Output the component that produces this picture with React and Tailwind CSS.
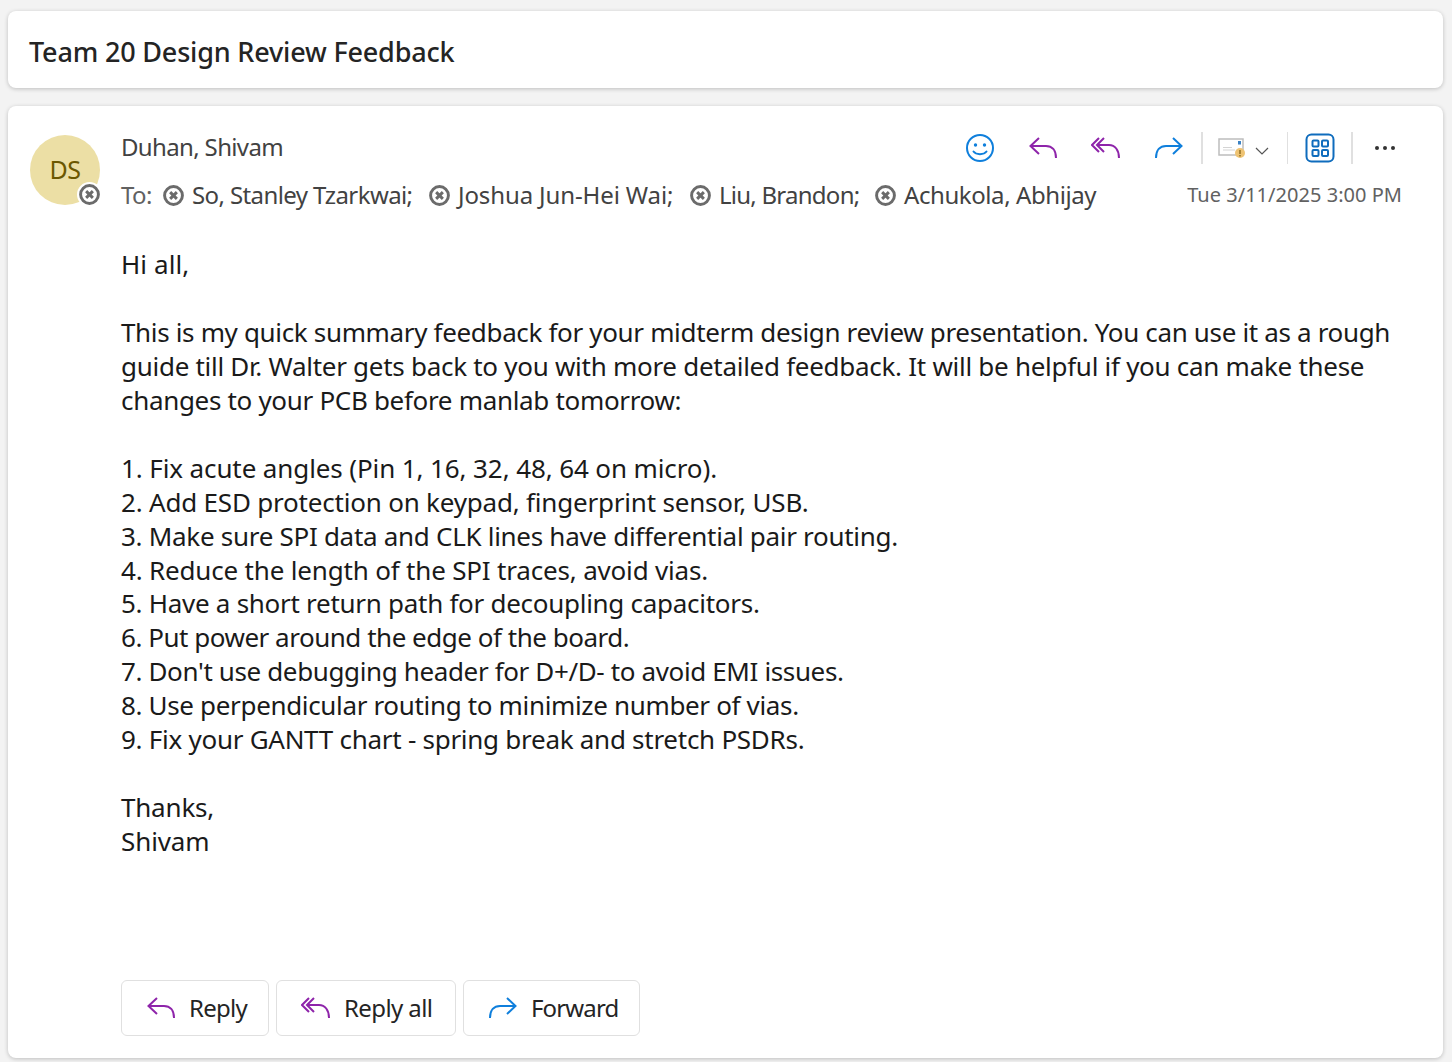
const ReplyIcon = ({ className }) => (
  <svg viewBox="0 0 30 26" className={className} fill="none" stroke="#8e24aa" strokeWidth="2">
    <path d="M11 3 L2.5 11 L11 19" />
    <path d="M2.5 11 H18 C24 11 28 15 28 23" />
  </svg>
);

const ReplyAllIcon = ({ className }) => (
  <svg viewBox="0 0 30 26" className={className} fill="none" stroke="#8e24aa" strokeWidth="2">
    <path d="M8 3 L1 10 L8 17" />
    <path d="M13 3 L6 10 L13 17" />
    <path d="M6 10 H18 C24 10 28 15 28 23" />
  </svg>
);

const ForwardIcon = ({ className }) => (
  <svg viewBox="0 0 30 26" className={className} fill="none" stroke="#0f7fdc" strokeWidth="2">
    <path d="M19 3 L27.5 11 L19 19" />
    <path d="M27.5 11 H12 C6 11 2 15 2 23" />
  </svg>
);

const UnknownBadge = ({ className }) => (
  <svg viewBox="0 0 20 20" className={className} fill="none">
    <circle cx="10" cy="10" r="8.5" stroke="#6b6b6b" strokeWidth="2.8" fill="#fff" />
    <path d="M6.8 6.8 L13.2 13.2 M13.2 6.8 L6.8 13.2" stroke="#6b6b6b" strokeWidth="2.8" />
  </svg>
);

const recipients = [
  { name: 'So, Stanley Tzarkwai;', width: 'w-[266px]', spacing: 'tracking-[-0.6px]' },
  { name: 'Joshua Jun-Hei Wai;', width: 'w-[261px]', spacing: 'tracking-[-0.12px]' },
  { name: 'Liu, Brandon;', width: 'w-[185px]', spacing: 'tracking-[-0.75px]' },
  { name: 'Achukola, Abhijay', width: 'w-[230px]', spacing: 'tracking-[-0.42px]' },
];

const items = [
  { text: '1. Fix acute angles (Pin 1, 16, 32, 48, 64 on micro).', spacing: 'tracking-[-0.11px]' },
  { text: '2. Add ESD protection on keypad, fingerprint sensor, USB.', spacing: 'tracking-[-0.2px]' },
  { text: '3. Make sure SPI data and CLK lines have differential pair routing.', spacing: 'tracking-[-0.29px]' },
  { text: '4. Reduce the length of the SPI traces, avoid vias.', spacing: 'tracking-[-0.18px]' },
  { text: '5. Have a short return path for decoupling capacitors.', spacing: 'tracking-[-0.28px]' },
  { text: '6. Put power around the edge of the board.', spacing: 'tracking-[-0.48px]' },
  { text: "7. Don't use debugging header for D+/D- to avoid EMI issues.", spacing: 'tracking-[-0.37px]' },
  { text: '8. Use perpendicular routing to minimize number of vias.', spacing: 'tracking-[-0.34px]' },
  { text: '9. Fix your GANTT chart - spring break and stretch PSDRs.', spacing: 'tracking-[-0.27px]' },
];

const buttons = [
  { label: 'Reply', Icon: ReplyIcon, width: 'w-[148px]', spacing: 'tracking-[-0.7px]' },
  { label: 'Reply all', Icon: ReplyAllIcon, width: 'w-[180px]', spacing: 'tracking-[-0.6px]' },
  { label: 'Forward', Icon: ForwardIcon, width: 'w-[177px]', spacing: 'tracking-[-0.85px]' },
];

const App = () => {
  return (
    <div className="w-[1452px] h-[1062px] overflow-hidden bg-[#f3f3f3] pt-[11px] pl-2 pr-[9px] font-['Noto_Sans',sans-serif] text-[#242424]">
      <div className="h-[77px] flex items-center pl-[21px] pt-[6px] bg-white rounded-lg shadow-[0_1px_4px_rgba(0,0,0,0.22)]">
        <h1 className="text-[27px] font-medium tracking-[-0.18px] text-[#242424]">Team 20 Design Review Feedback</h1>
      </div>

      <div className="mt-[18px] h-[952px] flex flex-col bg-white rounded-lg shadow-[0_1px_4px_rgba(0,0,0,0.22)] pt-[29px] pl-[22px] pr-[41px]">
        <div className="flex">
          <div className="relative w-[70px] h-[70px] shrink-0 rounded-full bg-[#ecdfa5] flex items-center justify-center text-[25px] font-normal tracking-[-0.5px] text-[#6b5700]">
            DS
            <span className="absolute right-[-2px] bottom-[-2px] w-[25px] h-[25px] rounded-full bg-white flex items-center justify-center">
              <UnknownBadge className="w-[21px] h-[21px]" />
            </span>
          </div>

          <div className="ml-[21px] flex-1 min-w-0">
            <div className="flex items-center h-[26px]">
              <span className="text-[24px] tracking-[-0.65px] text-[#424242] -translate-y-px">Duhan, Shivam</span>
              <div className="ml-auto flex items-center mr-[6px]">
                <svg viewBox="0 0 30 30" className="w-[30px] h-[30px]" fill="none" stroke="#0f7fdc" strokeWidth="2">
                  <circle cx="15" cy="15" r="13" />
                  <circle cx="10.5" cy="12" r="1.7" fill="#0f7fdc" stroke="none" />
                  <circle cx="19.5" cy="12" r="1.7" fill="#0f7fdc" stroke="none" />
                  <path d="M8.5 18.5 C11 22 19 22 21.5 18.5" strokeLinecap="round" />
                </svg>
                <ReplyIcon className="w-[30px] h-[26px] ml-[33px]" />
                <ReplyAllIcon className="w-[30px] h-[26px] ml-[33px]" />
                <ForwardIcon className="w-[30px] h-[26px] ml-[33px]" />
                <div className="w-[2px] h-[32px] bg-[#e0e0e0] ml-[17px]" />
                <svg viewBox="0 0 28 22" className="w-[28px] h-[22px] ml-[15px]" fill="none">
                  <rect x="1" y="2" width="24" height="16" fill="#fff" stroke="#bdbdbd" strokeWidth="1.5" />
                  <rect x="20" y="4" width="3" height="3.5" fill="#3b82c4" />
                  <path d="M5 10.5 H14 M5 13 H17" stroke="#d4d4d4" />
                  <circle cx="22" cy="16" r="5" fill="#eec373" />
                  <path d="M22 13 V17 M22 18 V19.5" stroke="#7a5a10" strokeWidth="1.2" />
                </svg>
                <svg viewBox="0 0 14 8" className="w-[14px] h-[8px] ml-[9px] mt-[5px]" fill="none" stroke="#555" strokeWidth="1.2">
                  <path d="M1 1 L7 7 L13 1" />
                </svg>
                <div className="w-[1px] h-[32px] bg-[#e0e0e0] ml-[18px]" />
                <svg viewBox="0 0 30 30" className="w-[30px] h-[30px] ml-[17px]" fill="none" stroke="#0f6cbd" strokeWidth="2">
                  <rect x="1.5" y="1.5" width="27" height="27" rx="5" />
                  <rect x="7.5" y="7.5" width="6" height="6" rx="1" />
                  <rect x="17" y="7.5" width="6" height="6" rx="1" />
                  <rect x="7.5" y="17" width="6" height="6" rx="1" />
                  <rect x="17" y="17" width="6" height="6" rx="1" />
                </svg>
                <div className="w-[2px] h-[32px] bg-[#e0e0e0] ml-[16px]" />
                <div className="flex gap-[4px] ml-[22px] mr-[1px]">
                  <span className="w-1 h-1 rounded-full bg-[#333]" />
                  <span className="w-1 h-1 rounded-full bg-[#333]" />
                  <span className="w-1 h-1 rounded-full bg-[#333]" />
                </div>
              </div>
            </div>

            <div className="flex items-center mt-[21px] h-[26px]">
              <span className="w-[42px] text-[24px] tracking-[-0.6px] text-[#616161]">To:</span>
              {recipients.map(({ name, width, spacing }) => (
                <span key={name} className={`flex items-center ${width}`}>
                  <UnknownBadge className="w-[21px] h-[21px] shrink-0" />
                  <span className={`ml-[8px] whitespace-nowrap text-[24px] ${spacing} text-[#424242]`}>{name}</span>
                </span>
              ))}
              <span className="ml-auto text-[20px] tracking-[0.03px] text-[#616161] whitespace-nowrap">Tue 3/11/2025 3:00 PM</span>
            </div>
          </div>
        </div>

        <div className="ml-[91px] mt-[40px] text-[26px] leading-[33.9px] tracking-[-0.34px] text-[#1a1a1a] whitespace-nowrap">
          <p className="tracking-[0.09px]">Hi all,</p>
          <p className="mt-[33.9px]">This is my quick summary feedback for your midterm design review presentation. You can use it as a rough</p>
          <p className="tracking-[-0.28px]">guide till Dr. Walter gets back to you with more detailed feedback. It will be helpful if you can make these</p>
          <p className="tracking-[-0.32px]">changes to your PCB before manlab tomorrow:</p>
          <div className="mt-[34.3px]">
            {items.map(({ text, spacing }) => (
              <p key={text} className={spacing}>{text}</p>
            ))}
          </div>
          <p className="mt-[34.4px] tracking-[-0.2px]">Thanks,</p>
          <p className="tracking-[-0.1px]">Shivam</p>
        </div>

        <div className="ml-[91px] mt-auto mb-[22px] flex gap-[7px]">
          {buttons.map(({ label, Icon, width, spacing }) => (
            <button key={label} className={`${width} h-[56px] flex items-center pl-[24px] bg-white border border-[#e0e0e0] rounded-[6px]`}>
              <Icon className="w-[30px] h-[26px] shrink-0" />
              <span className={`ml-[13px] text-[24px] ${spacing} text-[#242424]`}>{label}</span>
            </button>
          ))}
        </div>
      </div>
    </div>
  );
};

export default App;
